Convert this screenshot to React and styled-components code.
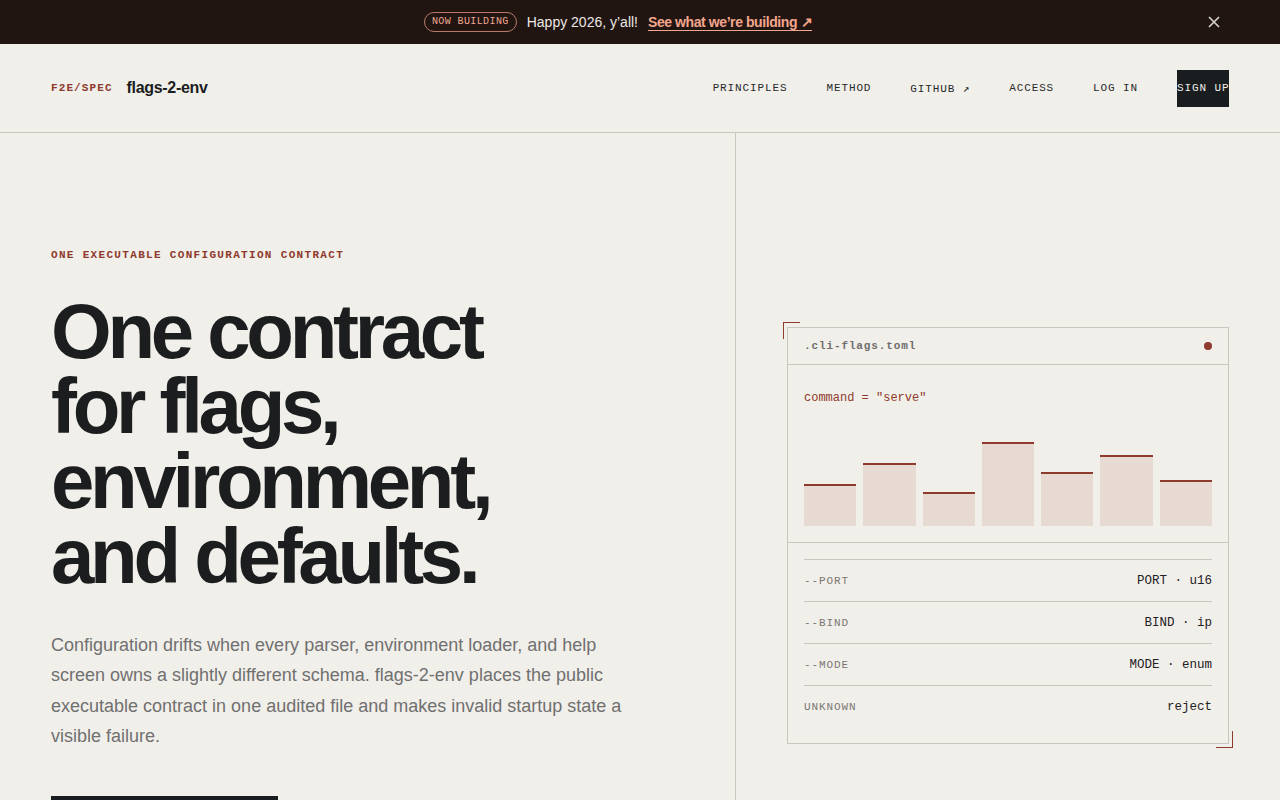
import React from "react";
import styled, { createGlobalStyle } from "styled-components";

const Global = createGlobalStyle`
  * { box-sizing: border-box; }
  body {
    margin: 0;
    background: #f1efea;
    font-family: "Liberation Sans", Arial, sans-serif;
    color: #1b1d1f;
  }
`;

const mono = `"Liberation Mono", "DejaVu Sans Mono", monospace`;

const Banner = styled.div`
  height: 44px;
  background: #211512;
  display: flex;
  align-items: center;
  justify-content: center;
  padding-right: 44px;
  position: relative;
  font-family: "Liberation Sans", Arial, sans-serif;
  font-size: 14px;
`;

const Badge = styled.span`
  font-family: ${mono};
  font-size: 10px;
  letter-spacing: 0.04em;
  color: #f1a890;
  border: 1px solid #b97a69;
  border-radius: 999px;
  padding: 3px 7px;
  margin-right: 10px;
  line-height: 12px;
`;

const BannerText = styled.span`
  color: #ece8e4;
  margin-right: 10px;
`;

const BannerLink = styled.a`
  color: #f4a68c;
  font-weight: 700;
  letter-spacing: -0.03em;
  text-decoration: underline;
  text-underline-offset: 3px;
`;

const Close = styled.button`
  position: absolute;
  right: 58px;
  top: 14px;
  width: 16px;
  height: 16px;
  padding: 0;
  border: none;
  background: none;
  display: flex;
  align-items: center;
  justify-content: center;
`;

const Header = styled.header`
  height: 89px;
  border-bottom: 1px solid #c9c5bf;
  display: flex;
  align-items: center;
  justify-content: space-between;
  padding: 0 51px;
`;

const Brand = styled.div`
  display: flex;
  align-items: center;
  gap: 14px;
`;

const BrandTag = styled.span`
  font-family: ${mono};
  font-weight: 700;
  font-size: 11px;
  letter-spacing: 0.1em;
  color: #8e3a2c;
`;

const BrandName = styled.span`
  font-size: 16px;
  font-weight: 700;
  letter-spacing: -0.02em;
  color: #1b1d1f;
`;

const Nav = styled.nav`
  display: flex;
  align-items: center;
  gap: 39px;
`;

const NavLink = styled.a`
  font-family: ${mono};
  font-size: 11px;
  letter-spacing: 0.08em;
  color: #26282a;
  margin-top: ${(p) => (p.$drop ? "1px" : "-1px")};
`;

const SignUp = styled.a`
  font-family: ${mono};
  font-size: 11px;
  letter-spacing: 0.08em;
  background: #1a1d1f;
  color: #f1efea;
  height: 37px;
  width: 52px;
  display: flex;
  align-items: center;
  white-space: nowrap;
`;

const Main = styled.main`
  display: grid;
  grid-template-columns: 736px 1fr;
  min-height: 667px;
`;

const Left = styled.section`
  border-right: 1px solid #c9c5bf;
  padding: 116px 51px 0;
`;

const Eyebrow = styled.div`
  font-family: ${mono};
  font-weight: 700;
  font-size: 11px;
  letter-spacing: 0.12em;
  color: #8e3a2c;
`;

const Title = styled.h1`
  margin: 33px 0 0;
  font-size: 78px;
  line-height: 75px;
  font-weight: 700;
  letter-spacing: -0.055em;
  color: #1b1d1f;
`;

const Lead = styled.p`
  margin: 36px 0 0;
  max-width: 580px;
  font-size: 18px;
  line-height: 30.3px;
  color: #707070;
`;

const Cta = styled.div`
  margin-top: 45px;
  width: 227px;
  height: 40px;
  background: #1a1d1f;
`;

const Right = styled.section`
  padding: 194px 51px 0;
`;

const Card = styled.div`
  position: relative;
  border: 1px solid #c9c5bf;
`;

const Corner = styled.span`
  position: absolute;
  width: 17px;
  height: 17px;
  border-color: #8e3a2c;
  border-style: solid;
  border-width: ${(p) => (p.$end ? "0 1px 1px 0" : "1px 0 0 1px")};
  ${(p) => (p.$end ? "right: -5px; bottom: -5px;" : "left: -5px; top: -6px;")}
`;

const CardHead = styled.div`
  height: 37px;
  border-bottom: 1px solid #c9c5bf;
  display: flex;
  align-items: center;
  justify-content: space-between;
  padding: 0 16px;
`;

const FileName = styled.span`
  font-family: ${mono};
  font-weight: 700;
  font-size: 11px;
  letter-spacing: 0.08em;
  color: #6f6d6a;
`;

const Dot = styled.span`
  width: 8px;
  height: 8px;
  border-radius: 50%;
  background: #8e3a2c;
`;

const CardBody = styled.div`
  padding: 26px 16px 16px;
  border-bottom: 1px solid #c9c5bf;
`;

const Code = styled.div`
  font-family: ${mono};
  font-size: 12px;
  color: #8e3a2c;
`;

const Bars = styled.div`
  margin-top: 37px;
  height: 84px;
  display: flex;
  align-items: flex-end;
  gap: 7px;
`;

const Bar = styled.div`
  flex: 1;
  background: #e6dad3;
  border-top: 2px solid #8e3a2c;
`;

const Rows = styled.div`
  padding: 16px;
`;

const Row = styled.div`
  height: 42px;
  border-top: 1px solid #c9c5bf;
  display: flex;
  align-items: center;
  justify-content: space-between;
`;

const Key = styled.span`
  font-family: ${mono};
  font-size: 11px;
  letter-spacing: 0.08em;
  color: #7a7772;
`;

const Val = styled.span`
  font-family: ${mono};
  font-size: 12.5px;
  color: #1f2123;
`;

const bars = [42, 63, 34, 84, 54, 71, 46];
const rows = [
  ["--PORT", "PORT · u16"],
  ["--BIND", "BIND · ip"],
  ["--MODE", "MODE · enum"],
  ["UNKNOWN", "reject"],
];

export default function App() {
  return (
    <>
      <Global />
      <Banner>
        <Badge>NOW BUILDING</Badge>
        <BannerText>Happy 2026, y’all!</BannerText>
        <BannerLink>See what we’re building ↗</BannerLink>
        <Close aria-label="close">
          <svg width="12" height="12" viewBox="0 0 12 12">
            <path d="M1 1L11 11M11 1L1 11" stroke="#d8d4d0" strokeWidth="1.6" />
          </svg>
        </Close>
      </Banner>
      <Header>
        <Brand>
          <BrandTag>F2E/SPEC</BrandTag>
          <BrandName>flags-2-env</BrandName>
        </Brand>
        <Nav>
          <NavLink>PRINCIPLES</NavLink>
          <NavLink>METHOD</NavLink>
          <NavLink $drop>GITHUB ↗</NavLink>
          <NavLink>ACCESS</NavLink>
          <NavLink>LOG IN</NavLink>
          <SignUp>SIGN UP</SignUp>
        </Nav>
      </Header>
      <Main>
        <Left>
          <Eyebrow>ONE EXECUTABLE CONFIGURATION CONTRACT</Eyebrow>
          <Title>
            One contract
            <br />
            for flags,
            <br />
            environment,
            <br />
            and defaults.
          </Title>
          <Lead>
            Configuration drifts when every parser, environment loader, and help
            screen owns a slightly different schema. flags-2-env places the public
            executable contract in one audited file and makes invalid startup state a
            visible failure.
          </Lead>
          <Cta />
        </Left>
        <Right>
          <Card>
            <Corner />
            <Corner $end />
            <CardHead>
              <FileName>.cli-flags.toml</FileName>
              <Dot />
            </CardHead>
            <CardBody>
              <Code>command = "serve"</Code>
              <Bars>
                {bars.map((h, i) => (
                  <Bar key={i} style={{ height: h }} />
                ))}
              </Bars>
            </CardBody>
            <Rows>
              {rows.map(([k, v]) => (
                <Row key={k}>
                  <Key>{k}</Key>
                  <Val>{v}</Val>
                </Row>
              ))}
            </Rows>
          </Card>
        </Right>
      </Main>
    </>
  );
}
